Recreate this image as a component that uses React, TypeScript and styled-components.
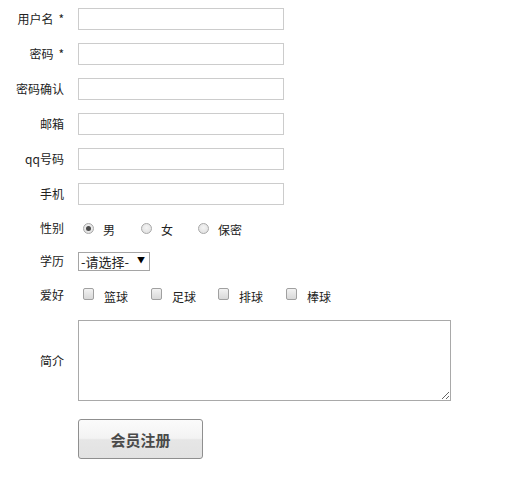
import React from 'react';
import styled, { createGlobalStyle } from 'styled-components';

const GlobalStyle = createGlobalStyle`
  html, body {
    margin: 0;
    padding: 0;
    background: #ffffff;
  }
  body {
    font-family: "Noto Sans CJK SC", "Liberation Sans", sans-serif;
    font-size: 12px;
    color: #222;
  }
`;

const Form = styled.form`
  display: flex;
  flex-direction: column;
  padding-top: 8px;
`;

const Row = styled.div<{ $mt?: number; $h?: number }>`
  display: flex;
  align-items: center;
  margin-top: ${(p) => (p.$mt !== undefined ? p.$mt : 13)}px;
  min-height: ${(p) => p.$h || 22}px;
  &:first-child {
    margin-top: 0;
  }
`;

const Label = styled.label`
  width: 64px;
  flex-shrink: 0;
  text-align: right;
  margin-right: 14px;
  line-height: 16px;
  white-space: nowrap;
`;

const Star = styled.span`
  margin-left: 5px;
`;

const TextInput = styled.input`
  box-sizing: border-box;
  width: 206px;
  height: 22px;
  margin: 0;
  padding: 0 4px;
  border: 1px solid #cccccc;
  outline: none;
  font: inherit;
`;

const Options = styled.div`
  display: flex;
  align-items: center;
  padding-left: 5px;
`;

const Option = styled.label<{ $w: number }>`
  display: flex;
  align-items: center;
  width: ${(p) => p.$w}px;
  line-height: 16px;
`;

const OptionText = styled.span`
  padding-top: 4px;
`;

const Radio = styled.input.attrs({ type: 'radio' })`
  appearance: none;
  box-sizing: border-box;
  width: 11px;
  height: 11px;
  margin: 0 9px 0 0;
  border: 1px solid #a8a8a8;
  border-radius: 50%;
  background: radial-gradient(circle at 50% 40%, #f4f4f4 0%, #dcdcdc 100%);
  position: relative;
  top: 0;
  &:checked::after {
    content: '';
    position: absolute;
    left: 2px;
    top: 2px;
    width: 5px;
    height: 5px;
    border-radius: 50%;
    background: #4a4a4a;
  }
`;

const Check = styled.input.attrs({ type: 'checkbox' })`
  appearance: none;
  box-sizing: border-box;
  width: 11px;
  height: 12px;
  margin: 0 10px 0 0;
  border: 1px solid #a0a0a0;
  border-radius: 2px;
  background: linear-gradient(#f2f2f2, #d8d8d8);
  position: relative;
  top: -1px;
`;

const SelectWrap = styled.div`
  position: relative;
  display: inline-block;
`;

const Select = styled.select`
  appearance: none;
  box-sizing: border-box;
  width: 72px;
  height: 19px;
  margin: 0;
  padding: 0 0 0 2px;
  border: 1px solid #a5a5a5;
  background: #fff;
  font-family: "Noto Sans CJK SC", "Liberation Sans", sans-serif;
  font-size: 13px;
  line-height: 17px;
  color: #222;
  outline: none;
`;

const Arrow = styled.span`
  position: absolute;
  right: 5px;
  top: 4px;
  font-size: 8px;
  line-height: 8px;
  color: #000;
  pointer-events: none;
`;

const TextArea = styled.textarea`
  box-sizing: border-box;
  width: 373px;
  height: 81px;
  margin: 0;
  padding: 2px;
  border: 1px solid #a9a9a9;
  outline: none;
  font: inherit;
`;

const Submit = styled.button`
  box-sizing: border-box;
  width: 125px;
  height: 40px;
  margin: 0;
  border: 1px solid #8f8f8f;
  border-radius: 3px;
  background: linear-gradient(#fbfbfb 0%, #f3f3f3 48%, #e6e6e6 52%, #e2e2e2 100%);
  font-family: "Noto Sans CJK SC", "Liberation Sans", sans-serif;
  font-size: 15px;
  font-weight: 700;
  color: #4a4a4a;
  cursor: pointer;
`;

const fields = [
  { name: 'username', label: '用户名', required: true, type: 'text' },
  { name: 'password', label: '密码', required: true, type: 'password' },
  { name: 'confirm', label: '密码确认', required: false, type: 'password' },
  { name: 'email', label: '邮箱', required: false, type: 'text' },
  { name: 'qq', label: 'qq号码', required: false, type: 'text' },
  { name: 'phone', label: '手机', required: false, type: 'text' },
];

const genders = [
  { value: 'm', text: '男', w: 58 },
  { value: 'f', text: '女', w: 57 },
  { value: 'x', text: '保密', w: 60 },
];

const hobbies = [
  { value: 'basketball', text: '篮球', w: 68 },
  { value: 'football', text: '足球', w: 67 },
  { value: 'volleyball', text: '排球', w: 68 },
  { value: 'baseball', text: '棒球', w: 60 },
];

export default function App() {
  return (
    <>
      <GlobalStyle />
      <Form onSubmit={(e) => e.preventDefault()}>
        {fields.map((f) => (
          <Row key={f.name}>
            <Label htmlFor={f.name}>
              {f.label}
              {f.required && <Star>*</Star>}
            </Label>
            <TextInput id={f.name} name={f.name} type={f.type} />
          </Row>
        ))}
        <Row $mt={12}>
          <Label>性别</Label>
          <Options>
            {genders.map((g) => (
              <Option key={g.value} $w={g.w}>
                <Radio name="sex" value={g.value} defaultChecked={g.value === 'm'} />
                <OptionText>{g.text}</OptionText>
              </Option>
            ))}
          </Options>
        </Row>
        <Row $mt={11}>
          <Label htmlFor="edu">学历</Label>
          <SelectWrap>
            <Select id="edu" name="edu" defaultValue="">
              <option value="">-请选择-</option>
              <option value="1">高中</option>
              <option value="2">本科</option>
              <option value="3">硕士</option>
            </Select>
            <Arrow>▼</Arrow>
          </SelectWrap>
        </Row>
        <Row $mt={12}>
          <Label>爱好</Label>
          <Options>
            {hobbies.map((h) => (
              <Option key={h.value} $w={h.w}>
                <Check name="hobby" value={h.value} />
                <OptionText>{h.text}</OptionText>
              </Option>
            ))}
          </Options>
        </Row>
        <Row $mt={14} $h={81}>
          <Label htmlFor="intro">简介</Label>
          <TextArea id="intro" name="intro" />
        </Row>
        <Row $mt={18} $h={40}>
          <Label />
          <Submit type="submit">会员注册</Submit>
        </Row>
      </Form>
    </>
  );
}
